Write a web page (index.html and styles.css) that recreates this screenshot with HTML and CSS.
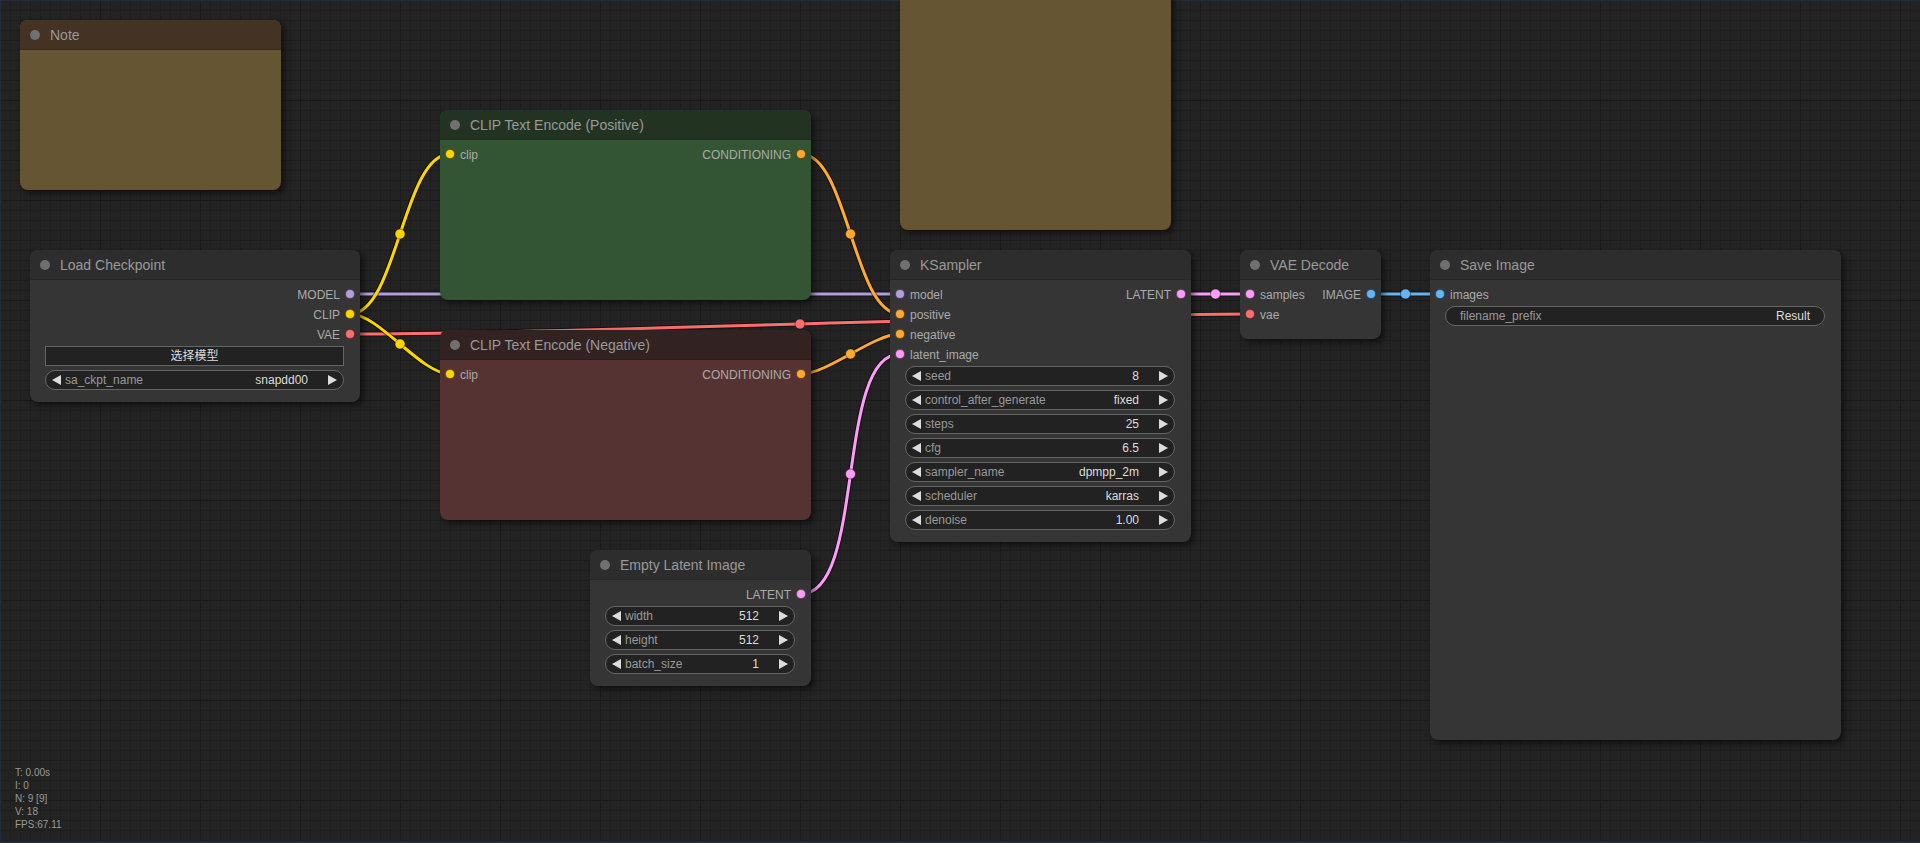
FILE: index.html
```html
<!DOCTYPE html>
<html lang="en">
<head>
<meta charset="utf-8">
<title>ComfyUI</title>
<link rel="stylesheet" href="styles.css">
</head>
<body>
<div class="canvas">
  <svg class="links" width="1920" height="843" viewBox="0 0 1920 843">
    <g class="lk c-model">
      <path class="lb" d="M350 294 L900 294"/><path class="lc" d="M350 294 L900 294"/><circle cx="625" cy="294" r="5"/>
    </g>
    <g class="lk c-vae">
      <path class="lb" d="M350 334 C575 334 1025 314 1250 314"/><path class="lc" d="M350 334 C575 334 1025 314 1250 314"/><circle cx="800" cy="324" r="5"/>
    </g>
    <g class="lk c-clip">
      <path class="lb" d="M350 314 C397.2 314 402.8 154 450 154"/><path class="lc" d="M350 314 C397.2 314 402.8 154 450 154"/><circle cx="400" cy="234" r="5"/>
    </g>
    <g class="lk c-clip">
      <path class="lb" d="M350 314 C379.2 314 420.8 374 450 374"/><path class="lc" d="M350 314 C379.2 314 420.8 374 450 374"/><circle cx="400" cy="344" r="5"/>
    </g>
    <g class="lk c-cond">
      <path class="lb" d="M801 154 C848 154 853 314 900 314"/><path class="lc" d="M801 154 C848 154 853 314 900 314"/><circle cx="850.5" cy="234" r="5"/>
    </g>
    <g class="lk c-cond">
      <path class="lb" d="M801 374 C827.7 374 873.3 334 900 334"/><path class="lc" d="M801 374 C827.7 374 873.3 334 900 334"/><circle cx="850.5" cy="354" r="5"/>
    </g>
    <g class="lk c-latent">
      <path class="lb" d="M801 594 C865.9 594 835.1 354 900 354"/><path class="lc" d="M801 594 C865.9 594 835.1 354 900 354"/><circle cx="850.5" cy="474" r="5"/>
    </g>
    <g class="lk c-latent">
      <path class="lb" d="M1181 294 L1250 294"/><path class="lc" d="M1181 294 L1250 294"/><circle cx="1215.5" cy="294" r="5"/>
    </g>
    <g class="lk c-image">
      <path class="lb" d="M1371 294 L1440 294"/><path class="lc" d="M1371 294 L1440 294"/><circle cx="1405.5" cy="294" r="5"/>
    </g>
  </svg>

  <!-- Note -->
  <div class="node n-note yellow">
    <div class="node-title"><span class="tdot"></span><span class="ttext">Note</span></div>
    <div class="node-body"></div>
  </div>

  <!-- Top note (header off-screen) -->
  <div class="node n-top yellow">
    <div class="node-body"></div>
  </div>

  <!-- Load Checkpoint -->
  <div class="node n-load">
    <div class="node-title"><span class="tdot"></span><span class="ttext">Load Checkpoint</span></div>
    <div class="node-body">
      <div class="slot-row"><span></span><span class="slot out">MODEL<i class="dot c-model"></i></span></div>
      <div class="slot-row"><span></span><span class="slot out">CLIP<i class="dot c-clip"></i></span></div>
      <div class="slot-row"><span></span><span class="slot out">VAE<i class="dot c-vae"></i></span></div>
      <div class="widgets">
        <div class="btn">选择模型</div>
        <div class="widget">
          <svg class="arr" width="9" height="10" viewBox="0 0 9 10"><polygon points="9,0 0,5 9,10"/></svg>
          <span class="w-label">sa_ckpt_name</span><span class="w-value">snapdd00</span>
          <svg class="arr" width="9" height="10" viewBox="0 0 9 10"><polygon points="0,0 9,5 0,10"/></svg>
        </div>
      </div>
    </div>
  </div>

  <!-- CLIP Text Encode (Positive) -->
  <div class="node n-pos green">
    <div class="node-title"><span class="tdot"></span><span class="ttext">CLIP Text Encode (Positive)</span></div>
    <div class="node-body">
      <div class="slot-row"><span class="slot in"><i class="dot c-clip"></i>clip</span><span class="slot out">CONDITIONING<i class="dot c-cond"></i></span></div>
    </div>
  </div>

  <!-- CLIP Text Encode (Negative) -->
  <div class="node n-neg red">
    <div class="node-title"><span class="tdot"></span><span class="ttext">CLIP Text Encode (Negative)</span></div>
    <div class="node-body">
      <div class="slot-row"><span class="slot in"><i class="dot c-clip"></i>clip</span><span class="slot out">CONDITIONING<i class="dot c-cond"></i></span></div>
    </div>
  </div>

  <!-- KSampler -->
  <div class="node n-ks">
    <div class="node-title"><span class="tdot"></span><span class="ttext">KSampler</span></div>
    <div class="node-body">
      <div class="slot-row"><span class="slot in"><i class="dot c-model"></i>model</span><span class="slot out">LATENT<i class="dot c-latent"></i></span></div>
      <div class="slot-row"><span class="slot in"><i class="dot c-cond"></i>positive</span><span></span></div>
      <div class="slot-row"><span class="slot in"><i class="dot c-cond"></i>negative</span><span></span></div>
      <div class="slot-row"><span class="slot in"><i class="dot c-latent"></i>latent_image</span><span></span></div>
      <div class="widgets">
        <div class="widget"><svg class="arr" width="9" height="10" viewBox="0 0 9 10"><polygon points="9,0 0,5 9,10"/></svg><span class="w-label">seed</span><span class="w-value">8</span><svg class="arr" width="9" height="10" viewBox="0 0 9 10"><polygon points="0,0 9,5 0,10"/></svg></div>
        <div class="widget"><svg class="arr" width="9" height="10" viewBox="0 0 9 10"><polygon points="9,0 0,5 9,10"/></svg><span class="w-label">control_after_generate</span><span class="w-value">fixed</span><svg class="arr" width="9" height="10" viewBox="0 0 9 10"><polygon points="0,0 9,5 0,10"/></svg></div>
        <div class="widget"><svg class="arr" width="9" height="10" viewBox="0 0 9 10"><polygon points="9,0 0,5 9,10"/></svg><span class="w-label">steps</span><span class="w-value">25</span><svg class="arr" width="9" height="10" viewBox="0 0 9 10"><polygon points="0,0 9,5 0,10"/></svg></div>
        <div class="widget"><svg class="arr" width="9" height="10" viewBox="0 0 9 10"><polygon points="9,0 0,5 9,10"/></svg><span class="w-label">cfg</span><span class="w-value">6.5</span><svg class="arr" width="9" height="10" viewBox="0 0 9 10"><polygon points="0,0 9,5 0,10"/></svg></div>
        <div class="widget"><svg class="arr" width="9" height="10" viewBox="0 0 9 10"><polygon points="9,0 0,5 9,10"/></svg><span class="w-label">sampler_name</span><span class="w-value">dpmpp_2m</span><svg class="arr" width="9" height="10" viewBox="0 0 9 10"><polygon points="0,0 9,5 0,10"/></svg></div>
        <div class="widget"><svg class="arr" width="9" height="10" viewBox="0 0 9 10"><polygon points="9,0 0,5 9,10"/></svg><span class="w-label">scheduler</span><span class="w-value">karras</span><svg class="arr" width="9" height="10" viewBox="0 0 9 10"><polygon points="0,0 9,5 0,10"/></svg></div>
        <div class="widget"><svg class="arr" width="9" height="10" viewBox="0 0 9 10"><polygon points="9,0 0,5 9,10"/></svg><span class="w-label">denoise</span><span class="w-value">1.00</span><svg class="arr" width="9" height="10" viewBox="0 0 9 10"><polygon points="0,0 9,5 0,10"/></svg></div>
      </div>
    </div>
  </div>

  <!-- VAE Decode -->
  <div class="node n-vae">
    <div class="node-title"><span class="tdot"></span><span class="ttext">VAE Decode</span></div>
    <div class="node-body">
      <div class="slot-row"><span class="slot in"><i class="dot c-latent"></i>samples</span><span class="slot out">IMAGE<i class="dot c-image"></i></span></div>
      <div class="slot-row"><span class="slot in"><i class="dot c-vae"></i>vae</span><span></span></div>
    </div>
  </div>

  <!-- Save Image -->
  <div class="node n-save">
    <div class="node-title"><span class="tdot"></span><span class="ttext">Save Image</span></div>
    <div class="node-body">
      <div class="slot-row"><span class="slot in"><i class="dot c-image"></i>images</span><span></span></div>
      <div class="widgets">
        <div class="widget text"><span class="w-label">filename_prefix</span><span class="w-value">Result</span></div>
      </div>
    </div>
  </div>

  <!-- Empty Latent Image -->
  <div class="node n-empty">
    <div class="node-title"><span class="tdot"></span><span class="ttext">Empty Latent Image</span></div>
    <div class="node-body">
      <div class="slot-row"><span></span><span class="slot out">LATENT<i class="dot c-latent"></i></span></div>
      <div class="widgets">
        <div class="widget"><svg class="arr" width="9" height="10" viewBox="0 0 9 10"><polygon points="9,0 0,5 9,10"/></svg><span class="w-label">width</span><span class="w-value">512</span><svg class="arr" width="9" height="10" viewBox="0 0 9 10"><polygon points="0,0 9,5 0,10"/></svg></div>
        <div class="widget"><svg class="arr" width="9" height="10" viewBox="0 0 9 10"><polygon points="9,0 0,5 9,10"/></svg><span class="w-label">height</span><span class="w-value">512</span><svg class="arr" width="9" height="10" viewBox="0 0 9 10"><polygon points="0,0 9,5 0,10"/></svg></div>
        <div class="widget"><svg class="arr" width="9" height="10" viewBox="0 0 9 10"><polygon points="9,0 0,5 9,10"/></svg><span class="w-label">batch_size</span><span class="w-value">1</span><svg class="arr" width="9" height="10" viewBox="0 0 9 10"><polygon points="0,0 9,5 0,10"/></svg></div>
      </div>
    </div>
  </div>

  <div class="stats">
    <div>T: 0.00s</div>
    <div>I: 0</div>
    <div>N: 9 [9]</div>
    <div>V: 18</div>
    <div>FPS:67.11</div>
  </div>
</div>
</body>
</html>
```

FILE: styles.css
```css
html, body {
  margin: 0;
  padding: 0;
  width: 1920px;
  height: 843px;
  overflow: hidden;
  background: #222;
  font-family: "Liberation Sans", Arial, "Noto Sans CJK SC", sans-serif;
}

.canvas {
  position: relative;
  width: 1920px;
  height: 843px;
  overflow: hidden;
  background-color: #232323;
  background-image:
    linear-gradient(to right, #1a1a1a 1px, transparent 1px),
    linear-gradient(to bottom, #1a1a1a 1px, transparent 1px),
    linear-gradient(to right, #1e1e1e 1px, transparent 1px),
    linear-gradient(to bottom, #1e1e1e 1px, transparent 1px);
  background-size: 100px 100px, 100px 100px, 10px 10px, 10px 10px;
  background-position: 0 0, 0 0, 0 0, 0 0;
  box-shadow: inset 1px 1px 0 #212b3b, inset 0 -2px 0 #212b3b;
}

/* ---------- links ---------- */
.links {
  position: absolute;
  left: 0;
  top: 0;
}
.lk path { fill: none; }
.lk .lb { stroke: rgba(0, 0, 0, 0.45); stroke-width: 5; }
.lk .lc { stroke: currentColor; stroke-width: 3; }
.lk circle { fill: currentColor; stroke: rgba(0, 0, 0, 0.4); stroke-width: 1; }

.c-model { color: #b39ddb; }
.c-clip { color: #ffd500; }
.c-vae { color: #ff6e6e; }
.c-cond { color: #ffa931; }
.c-latent { color: #ff9cf9; }
.c-image { color: #64b5f6; }

/* ---------- nodes ---------- */
.node {
  position: absolute;
  display: flex;
  flex-direction: column;
  border-radius: 8px;
  overflow: hidden;
  background: #353535;
  box-shadow: 3px 3px 6px rgba(0, 0, 0, 0.55);
}

.node-title {
  height: 30px;
  flex: 0 0 30px;
  box-sizing: border-box;
  display: flex;
  align-items: center;
  gap: 10px;
  padding-left: 10px;
  background: #2d2d2d;
  border-bottom: 1px solid rgba(0, 0, 0, 0.12);
  color: #999;
  font-size: 14px;
  white-space: nowrap;
}

.tdot {
  width: 10px;
  height: 10px;
  border-radius: 50%;
  background: #707070;
  flex: 0 0 10px;
}

.node-body {
  flex: 1;
  display: flex;
  flex-direction: column;
  padding-top: 5px;
}

.yellow { background: #665533; }
.yellow .node-title { background: #443322; }
.green { background: #335533; }
.green .node-title { background: #223322; }
.red { background: #553333; }
.red .node-title { background: #332222; }

/* node placement on the canvas */
.n-note { left: 20px; top: 20px; width: 261px; height: 170px; }
.n-top { left: 900px; top: -40px; width: 271px; height: 270px; }
.n-load { left: 30px; top: 250px; width: 330px; height: 152px; }
.n-pos { left: 440px; top: 110px; width: 371px; height: 190px; }
.n-neg { left: 440px; top: 330px; width: 371px; height: 190px; }
.n-ks { left: 890px; top: 250px; width: 301px; height: 292px; }
.n-vae { left: 1240px; top: 250px; width: 141px; height: 89px; }
.n-save { left: 1430px; top: 250px; width: 411px; height: 490px; }
.n-empty { left: 590px; top: 550px; width: 221px; height: 136px; }

/* ---------- slots ---------- */
.slot-row {
  height: 20px;
  display: flex;
  align-items: center;
  justify-content: space-between;
  padding: 0 5px;
}

.slot {
  display: flex;
  align-items: center;
  gap: 5px;
  color: #aaa;
  font-size: 12px;
  white-space: nowrap;
}

.dot {
  display: block;
  width: 8px;
  height: 8px;
  border-radius: 50%;
  background: currentColor;
  border: 1px solid rgba(0, 0, 0, 0.55);
  position: relative;
  top: -1px;
}

/* ---------- widgets ---------- */
.widgets {
  display: flex;
  flex-direction: column;
  gap: 4px;
  margin-top: 1px;
  padding: 0 16px 0 15px;
}

.widget {
  height: 20px;
  box-sizing: border-box;
  border: 1px solid #666;
  border-radius: 10px;
  background: #222;
  display: flex;
  align-items: center;
  padding: 0 6px;
  font-size: 12px;
  white-space: nowrap;
}

.arr { flex: 0 0 9px; fill: #ddd; }

.w-label {
  flex: 1;
  color: #999;
  margin-left: 4px;
}

.w-value {
  color: #ddd;
  margin-right: 20px;
}

.widget.text { padding: 0 14px; }
.widget.text .w-label { margin-left: 0; }
.widget.text .w-value { margin-right: 0; }

.btn {
  height: 20px;
  box-sizing: border-box;
  border: 1px solid #666;
  background: #222;
  color: #ddd;
  font-size: 12px;
  line-height: 18px;
  text-align: center;
}

/* ---------- stats overlay ---------- */
.stats {
  position: absolute;
  left: 15px;
  top: 766px;
  color: #999;
  font-size: 10px;
  line-height: 13px;
}
```
